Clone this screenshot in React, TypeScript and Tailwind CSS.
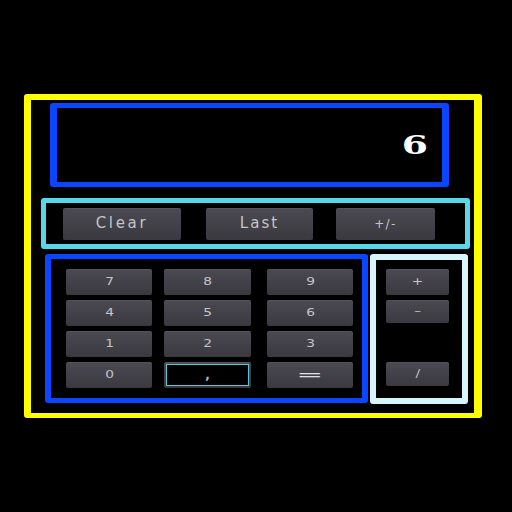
const keyCls =
  'flex items-center justify-center rounded-[2px] bg-gradient-to-b from-[#4b4a52] to-[#3a3940] text-[11px] text-[#c4c4c8] shadow-[inset_0_1px_0_rgba(255,255,255,0.06)]'

function Key({ label, w, h = 'h-[26px]' }: { label: string; w: string; h?: string }) {
  return (
    <div className={`${keyCls} ${w} ${h}`}>
      <span className="inline-block scale-x-125">{label}</span>
    </div>
  )
}

const rows = [
  ['7', '8', '9'],
  ['4', '5', '6'],
  ['1', '2', '3'],
]

export default function App() {
  return (
    <div
      className="h-[512px] w-[512px] bg-black pt-[94px] pl-[24px]"
      style={{ fontFamily: '"DejaVu Sans", "Liberation Sans", sans-serif' }}
    >
      <div className="flex h-[324px] w-[458px] flex-col rounded-[3px] border-y-[6px] border-l-[7px] border-r-[8px] border-b-[5px] border-[#ffff00]">
        {/* display */}
        <div className="ml-[19px] mt-[3px] flex h-[84px] w-[399px] items-center justify-end rounded-[3px] border-[5px] border-x-[7px] border-[#0a46ff] bg-black pr-[14px]">
          <span
            className="inline-block origin-right scale-x-[1.45] text-[26px] font-bold leading-none text-white"
            style={{ fontFamily: '"DejaVu Serif", "Liberation Serif", serif' }}
          >
            6
          </span>
        </div>

        {/* top action bar */}
        <div className="ml-[10px] mt-[11px] flex h-[51px] w-[429px] items-center rounded-[3px] border-[5px] border-[#58d6ea] pl-[17px]">
          <div className={`${keyCls} h-[32px] w-[118px] text-[15px] tracking-[0.18em]`}>Clear</div>
          <div className={`${keyCls} ml-[25px] h-[32px] w-[107px] text-[15px] tracking-[0.14em]`}>Last</div>
          <div className={`${keyCls} ml-[23px] h-[32px] w-[99px] text-[12px] tracking-[0.12em]`}>+/-</div>
        </div>

        <div className="ml-[14px] mt-[5px] flex">
          {/* number pad */}
          <div className="flex h-[149px] w-[323px] flex-col gap-[5px] rounded-[3px] border-[5px] border-x-[6px] border-[#0a46ff] pl-[15px] pt-[10px]">
            {rows.map((r) => (
              <div key={r[0]} className="flex">
                <Key label={r[0]} w="w-[86px]" />
                <div className="ml-[12px]">
                  <Key label={r[1]} w="w-[87px]" />
                </div>
                <div className="ml-[16px]">
                  <Key label={r[2]} w="w-[86px]" />
                </div>
              </div>
            ))}
            <div className="flex">
              <Key label="0" w="w-[86px]" />
              <div className={`${keyCls} ml-[12px] h-[26px] w-[87px] p-[2px]`}>
                <div className="flex h-full w-full items-center justify-center border-[1.5px] border-[#5fc6d6] bg-black text-[12px] font-bold text-[#bbbbbb]">
                  ,
                </div>
              </div>
              <div className={`${keyCls} ml-[16px] h-[26px] w-[86px] text-[14px] text-[#e0e0e4]`}>
                <span className="inline-block scale-x-[2.3]">=</span>
              </div>
            </div>
          </div>

          {/* operators */}
          <div className="ml-[2px] flex h-[150px] w-[98px] flex-col rounded-[3px] border-[6px] border-[#d6f6fa] pl-[10px] pt-[9px]">
            <Key label="+" w="w-[63px]" />
            <div className="mt-[5px]">
              <Key label="–" w="w-[63px]" h="h-[23px]" />
            </div>
            <div className="mt-[39px]">
              <Key label="/" w="w-[63px]" h="h-[24px]" />
            </div>
          </div>
        </div>
      </div>
    </div>
  )
}
